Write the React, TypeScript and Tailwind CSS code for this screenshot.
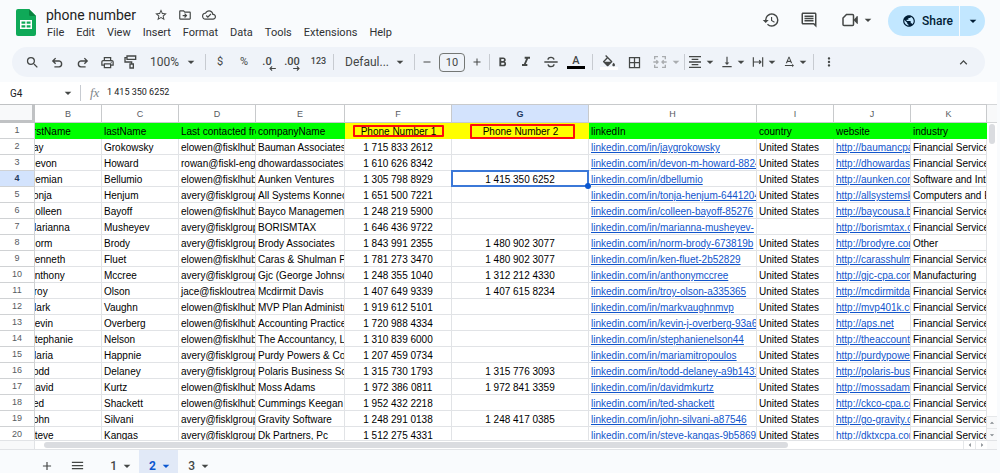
import React from 'react';
import {
  MdAdd,
  MdArrowDropDown,
  MdBorderAll,
  MdExpandLess,
  MdFormatAlignCenter,
  MdFormatBold,
  MdFormatColorFill,
  MdFormatItalic,
  MdHistory,
  MdMenu,
  MdMoreVert,
  MdOutlineCloudDone,
  MdOutlineComment,
  MdOutlineDriveFileMove,
  MdOutlinePrint,
  MdPublic,
  MdRemove,
  MdSearch,
  MdStarOutline,
  MdTextRotationNone,
  MdVerticalAlignBottom,
} from 'react-icons/md';

type Row = [string, string, string, string, string, string, string, string, string, string];

const US = 'United States';
const FIN = 'Financial Services';
const ELOWEN = 'elowen@fisklhub.com';
const AVERY = 'avery@fisklgroup.com';

const rows: Row[] = [
  ['Jay', 'Grokowsky', ELOWEN, 'Bauman Associates', '1 715 833 2612', '', 'linkedin.com/in/jaygrokowsky', US, 'http://baumancpa.com', FIN],
  ['Devon', 'Howard', 'rowan@fiskl-engage.com', 'dhowardassociates', '1 610 626 8342', '', 'linkedin.com/in/devon-m-howard-8824', US, 'http://dhowardassociates.com', FIN],
  ['Demian', 'Bellumio', ELOWEN, 'Aunken Ventures', '1 305 798 8929', '1 415 350 6252', 'linkedin.com/in/dbellumio', US, 'http://aunken.com', 'Software and Internet'],
  ['Tonja', 'Henjum', AVERY, 'All Systems Konnect', '1 651 500 7221', '', 'linkedin.com/in/tonja-henjum-6441204', US, 'http://allsystemsk.com', 'Computers and Electronics'],
  ['Colleen', 'Bayoff', ELOWEN, 'Bayco Management', '1 248 219 5900', '', 'linkedin.com/in/colleen-bayoff-85276', US, 'http://baycousa.biz', FIN],
  ['Marianna', 'Musheyev', AVERY, 'BORISMTAX', '1 646 436 9722', '', 'linkedin.com/in/marianna-musheyev-', '', 'http://borismtax.com', FIN],
  ['Norm', 'Brody', AVERY, 'Brody Associates', '1 843 991 2355', '1 480 902 3077', 'linkedin.com/in/norm-brody-673819b', US, 'http://brodyre.com', 'Other'],
  ['Kenneth', 'Fluet', ELOWEN, 'Caras & Shulman PC', '1 781 273 3470', '1 480 902 3077', 'linkedin.com/in/ken-fluet-2b52829', US, 'http://carasshulman.com', FIN],
  ['Anthony', 'Mccree', AVERY, 'Gjc (George Johnson)', '1 248 355 1040', '1 312 212 4330', 'linkedin.com/in/anthonymccree', US, 'http://gjc-cpa.com', 'Manufacturing'],
  ['Troy', 'Olson', 'jace@fiskloutreach.com', 'Mcdirmit Davis', '1 407 649 9339', '1 407 615 8234', 'linkedin.com/in/troy-olson-a335365', US, 'http://mcdirmitdavis.com', FIN],
  ['Mark', 'Vaughn', ELOWEN, 'MVP Plan Administrators', '1 919 612 5101', '', 'linkedin.com/in/markvaughnmvp', US, 'http://mvp401k.com', FIN],
  ['Kevin', 'Overberg', ELOWEN, 'Accounting Practice', '1 720 988 4334', '', 'linkedin.com/in/kevin-j-overberg-93a6b', US, 'http://aps.net', FIN],
  ['Stephanie', 'Nelson', ELOWEN, 'The Accountancy, LLP', '1 310 839 6000', '', 'linkedin.com/in/stephanienelson44', US, 'http://theaccountancy.com', FIN],
  ['Maria', 'Happnie', AVERY, 'Purdy Powers & Co', '1 207 459 0734', '', 'linkedin.com/in/mariamitropoulos', US, 'http://purdypowers.com', FIN],
  ['Todd', 'Delaney', AVERY, 'Polaris Business Solutions', '1 315 730 1793', '1 315 776 3093', 'linkedin.com/in/todd-delaney-a9b1431', US, 'http://polaris-business.com', FIN],
  ['David', 'Kurtz', ELOWEN, 'Moss Adams', '1 972 386 0811', '1 972 841 3359', 'linkedin.com/in/davidmkurtz', US, 'http://mossadams.com', FIN],
  ['Ted', 'Shackett', ELOWEN, 'Cummings Keegan', '1 952 432 2218', '', 'linkedin.com/in/ted-shackett', US, 'http://ckco-cpa.com', FIN],
  ['John', 'Silvani', AVERY, 'Gravity Software', '1 248 291 0138', '1 248 417 0385', 'linkedin.com/in/john-silvani-a87546', US, 'http://go-gravity.com', FIN],
  ['Steve', 'Kangas', AVERY, 'Dk Partners, Pc', '1 512 275 4331', '', 'linkedin.com/in/steve-kangas-9b58695', US, 'http://dktxcpa.com', FIN],
];

const headers: Row = [
  'firstName',
  'lastName',
  'Last contacted from',
  'companyName',
  'Phone Number 1',
  'Phone Number 2',
  'linkedIn',
  'country',
  'website',
  'industry',
];

const letters = ['B', 'C', 'D', 'E', 'F', 'G', 'H', 'I', 'J', 'K'];
const menus = ['File', 'Edit', 'View', 'Insert', 'Format', 'Data', 'Tools', 'Extensions', 'Help'];

const Caret = ({ className = '' }: { className?: string }) => (
  <MdArrowDropDown className={`size-4 shrink-0 ${className}`} />
);

const Divider = () => <span className="h-4 w-px shrink-0 bg-[#c7cbd1]" />;

interface ToolProps {
  label: string;
  width?: string;
  children: React.ReactNode;
}

const Tool = ({ label, width = 'w-6', children }: ToolProps) => (
  <button aria-label={label} className={`flex h-6 shrink-0 items-center justify-center ${width}`}>
    {children}
  </button>
);

const SheetsLogo = () => (
  <svg viewBox="0 0 20 27" className="h-[27px] w-5">
    <path d="M2 0h11l7 7v18a2 2 0 0 1-2 2H2a2 2 0 0 1-2-2V2a2 2 0 0 1 2-2z" fill="#0fa958" />
    <path d="M13 0l7 7h-5.5A1.5 1.5 0 0 1 13 5.500z" fill="#08843f" />
    <path d="M4 11h12v9H4z" fill="#fff" />
    <path d="M5.500 12.500h3.800v2.300H5.500zM10.700 12.500h3.800v2.300h-3.800zM5.500 16.200h3.800v2.300H5.500zM10.700 16.200h3.800v2.300h-3.800z" fill="#0fa958" />
  </svg>
);

const UndoIcon = ({ flip = false }: { flip?: boolean }) => (
  <svg viewBox="0 0 24 24" className={`size-[15px] ${flip ? '-scale-x-100' : ''}`} fill="none" stroke="currentColor" strokeWidth="2.200">
    <path d="M9 4L4.500 8.500 9 13M5 8.500h9.500a4.800 4.800 0 0 1 0 9.500H7" transform="translate(0 1)" />
  </svg>
);

const RollerIcon = () => (
  <svg viewBox="0 0 24 24" className="size-4" fill="none" stroke="currentColor" strokeWidth="2">
    <path d="M6 3h13v5H6zM6 5.500H3V12h10v3M10.500 15h5v6h-5z" />
  </svg>
);

const StrikeIcon = () => (
  <svg viewBox="0 0 24 24" className="size-4" fill="none" stroke="currentColor" strokeWidth="2">
    <path d="M2 12h20M16.500 8.500C16 6 14.500 5 12 5S7.500 6.500 7.500 8.800M7.500 15.500C8 18 9.500 19 12 19s4.500-1.200 4.500-3.500" />
  </svg>
);

const MergeIcon = () => (
  <svg viewBox="0 0 24 24" className="size-4" fill="none" stroke="currentColor" strokeWidth="2">
    <path d="M9 4H4v4M15 4h5v4M9 20H4v-4M15 20h5v-4M2 12h7M22 12h-7M6.500 9.500L9 12l-2.500 2.500M17.500 9.500L15 12l2.500 2.500" />
  </svg>
);

const WrapIcon = () => (
  <svg viewBox="0 0 24 24" className="size-4" fill="none" stroke="currentColor" strokeWidth="2">
    <path d="M4 4v16M20 4v16M4 12h13M14 9l3 3-3 3" />
  </svg>
);

const MeetIcon = () => (
  <svg viewBox="0 0 16 14" className="h-3.5 w-4" fill="none">
    <path d="M4.500 1.500h6a1 1 0 0 1 1 1v9a1 1 0 0 1-1 1h-8.500a1 1 0 0 1-1-1V5z" stroke="currentColor" strokeWidth="1.500" />
    <path d="M11.500 7L15 3.200a.5.5 0 0 1 .8.300v7a.5.5 0 0 1-.8.300z" fill="currentColor" />
  </svg>
);

const DecimalIcon = ({ more = false }: { more?: boolean }) => (
  <span className="relative text-[11px] font-medium leading-4">
    {more ? '.00' : '.0'}
    <svg
      viewBox="0 0 8 6"
      className={`absolute top-3 h-[5px] w-[7px] ${more ? 'right-0 -scale-x-100' : '-right-1'}`}
      fill="none"
      stroke="currentColor"
      strokeWidth="1.300"
    >
      <path d="M8 3H1M3.500 .5L1 3l2.500 2.500" />
    </svg>
  </span>
);

const TitleBar = () => (
  <header className="flex h-[47px] shrink-0 items-start pl-4 pr-[15px]">
    <div className="pt-[9px]">
      <SheetsLogo />
    </div>
    <div className="flex-1 pl-2.5 pt-1.5">
      <div className="flex h-[18px] items-center text-[#444746]">
        <input
          aria-label="Document name"
          defaultValue="phone number"
          className="w-[107px] bg-transparent text-[14px] leading-[18px] text-[#1f1f1f] outline-none"
        />
        <div className="flex items-center gap-2">
          <button aria-label="Star" className="flex size-4 items-center justify-center">
            <MdStarOutline className="size-3.5" />
          </button>
          <button aria-label="Move" className="flex size-4 items-center justify-center">
            <MdOutlineDriveFileMove className="size-3.5" />
          </button>
          <button aria-label="Saved to Drive" className="flex size-4 items-center justify-center">
            <MdOutlineCloudDone className="size-3.5" />
          </button>
        </div>
      </div>
      <nav className="flex gap-3 pl-px pt-px text-[11px] leading-4 text-[#303134]">
        {menus.map((menu) => (
          <button key={menu}>{menu}</button>
        ))}
      </nav>
    </div>
    <div className="flex h-10 items-center text-[#444746]">
      <button aria-label="Version history" className="mr-5">
        <MdHistory className="size-[18px]" />
      </button>
      <button aria-label="Comments" className="mr-6">
        <MdOutlineComment className="size-[18px]" />
      </button>
      <button aria-label="Join a call" className="mr-3 flex items-center">
        <MeetIcon />
        <Caret className="ml-0.5" />
      </button>
      <div className="mt-px flex h-[30px] overflow-hidden rounded-full text-[#001d35]">
        <button className="flex items-center gap-1.5 bg-[#c2e7ff] pl-3.5 pr-1.5 text-[12px] font-medium">
          <MdPublic className="size-3.5" />
          Share
        </button>
        <button aria-label="Share options" className="ml-px flex w-[25px] items-center justify-center bg-[#c2e7ff]">
          <Caret />
        </button>
      </div>
    </div>
  </header>
);

const Toolbar = () => (
  <div
    role="toolbar"
    className="ml-3 mr-[15px] flex h-[30px] shrink-0 items-center rounded-full bg-[#eff3f9] pl-2 pr-2.5 text-[11px] text-[#444746]"
  >
    <Tool label="Search menus" width="w-[25px]"><MdSearch className="size-[15px]" /></Tool>
    <Tool label="Undo" width="w-[25px]"><UndoIcon /></Tool>
    <Tool label="Redo" width="w-[25px]"><UndoIcon flip /></Tool>
    <Tool label="Print"><MdOutlinePrint className="size-[15px]" /></Tool>
    <Tool label="Paint format"><RollerIcon /></Tool>
    <button className="flex w-[62px] items-center justify-between pl-[7px] pr-1.5 text-[12px]">
      100%
      <Caret />
    </button>
    <Divider />
    <Tool label="Currency" width="w-7">$</Tool>
    <Tool label="Percent" width="w-5">%</Tool>
    <Tool label="Decrease decimals" width="w-[26px]"><DecimalIcon /></Tool>
    <Tool label="Increase decimals"><DecimalIcon more /></Tool>
    <Tool label="More formats" width="w-[29px]"><span className="text-[9px] font-medium">123</span></Tool>
    <Divider />
    <button className="flex w-20 items-center justify-between pl-[11px] pr-1.5 text-[12px]">
      Defaul...
      <Caret />
    </button>
    <Divider />
    <Tool label="Decrease font size"><MdRemove className="size-3" /></Tool>
    <input
      aria-label="Font size"
      defaultValue="10"
      className="h-[19px] w-[26px] shrink-0 rounded border border-[#747775] bg-transparent text-center text-[11px] outline-none"
    />
    <Tool label="Increase font size"><MdAdd className="size-3" /></Tool>
    <Divider />
    <Tool label="Bold" width="w-6"><MdFormatBold className="size-[15px]" /></Tool>
    <Tool label="Italic"><MdFormatItalic className="size-4" /></Tool>
    <Tool label="Strikethrough" width="w-[26px]"><StrikeIcon /></Tool>
    <Tool label="Text color">
      <span className="flex flex-col items-center text-[11px] font-medium leading-[11px]">
        A
        <span className="h-[3px] w-[18px] bg-black" />
      </span>
    </Tool>
    <span className="w-1" />
    <Divider />
    <Tool label="Fill color" width="w-[31px]">
      <span className="flex flex-col items-center">
        <MdFormatColorFill viewBox="0 0 24 18" className="h-3 w-4" />
        <span className="h-[3px] w-[18px] bg-white" />
      </span>
    </Tool>
    <Tool label="Borders" width="w-5"><MdBorderAll className="size-[15px]" /></Tool>
    <button aria-label="Merge cells" className="flex w-10 items-center justify-end text-[#a9acaf]">
      <MergeIcon />
      <Caret />
    </button>
    <Divider />
    <button aria-label="Horizontal align" className="flex w-[35px] items-center justify-end pr-0.5">
      <MdFormatAlignCenter className="size-4" />
      <Caret className="-ml-px" />
    </button>
    <button aria-label="Vertical align" className="flex w-[31px] items-center justify-end pr-0.5">
      <MdVerticalAlignBottom className="size-4" />
      <Caret className="-ml-px" />
    </button>
    <button aria-label="Text wrapping" className="flex w-[31px] items-center justify-end pr-0.5">
      <WrapIcon />
      <Caret className="-ml-px" />
    </button>
    <button aria-label="Text rotation" className="flex w-[31px] items-center justify-end pr-0.5">
      <MdTextRotationNone className="size-4" />
      <Caret className="-ml-px" />
    </button>
    <Divider />
    <Tool label="More" width="w-[29px]"><MdMoreVert className="size-3.5" /></Tool>
    <span className="flex-1" />
    <Tool label="Hide menus"><MdExpandLess className="size-[15px]" /></Tool>
  </div>
);

const FormulaBar = () => (
  <div className="mt-[5px] flex h-[22px] shrink-0 items-center bg-white pl-2.5 text-[10px] text-[#202124]">
    <input aria-label="Name box" defaultValue="G4" className="w-[50px] bg-transparent outline-none" />
    <Caret className="text-[#444746]" />
    <span className="ml-1" />
    <Divider />
    <span className="w-[26px] pl-[9px] font-['Liberation_Serif',serif] text-[13px] italic text-[#80868b]">fx</span>
    <input
      aria-label="Formula"
      defaultValue="1 415 350 6252"
      className="min-w-0 flex-1 bg-transparent text-[9px] outline-none"
    />
  </div>
);

const RedFrame = ({ className }: { className: string }) => (
  <span className={`pointer-events-none absolute z-10 rounded-[1px] border-2 border-[#ff0c0c] ${className}`} />
);

const Cell = ({ value, col, selected }: { value: string; col: number; selected: boolean }) => {
  const centered = col === 4 || col === 5;
  const link = col === 6 || col === 8;
  return (
    <td className="relative h-4 border-b border-r border-[#e1e3e6] p-0">
      <div
        className={`h-[15px] overflow-hidden whitespace-nowrap leading-[17px] ${
          centered ? 'text-center' : col === 0 ? '-indent-[7px]' : 'pl-0.5'
        }`}
      >
        {link ? (
          <a href="#" className="text-[#1155cc] underline">{value}</a>
        ) : (
          value
        )}
      </div>
      {selected && (
        <div className="absolute -bottom-px -left-px -right-px -top-px z-10 border-2 border-[#3b78d8]">
          <span className="absolute -bottom-1 -right-1 size-1.5 rounded-full bg-[#0b57d0]" />
        </div>
      )}
    </td>
  );
};

const Grid = () => (
  <div className="min-h-0 flex-1 overflow-hidden bg-white">
    <table className="w-full table-fixed border-separate border-spacing-0 font-['Liberation_Sans',Arial,sans-serif] text-[10px] text-black">
      <colgroup>
        <col className="w-[35px]" />
        <col className="w-[67px]" />
        <col className="w-[77px]" />
        <col className="w-[77px]" />
        <col className="w-[89px]" />
        <col className="w-[107px]" />
        <col className="w-[137px]" />
        <col className="w-[168px]" />
        <col className="w-[77px]" />
        <col className="w-[77px]" />
        <col />
      </colgroup>
      <thead>
        <tr>
          <th className="h-[19px] border-b-[3px] border-r-[3px] border-t border-[#c0c2c4] bg-[#f8f9fa] p-0" />
          {letters.map((letter) => (
            <th
              key={letter}
              className={`h-[19px] border-b border-r border-t border-[#c8cacc] p-0 text-[9px] leading-4 ${
                letter === 'G' ? 'bg-[#d3e3fd] font-bold text-[#1f3a5f]' : 'font-normal text-[#575b5f]'
              }`}
            >
              {letter}
            </th>
          ))}
        </tr>
      </thead>
      <tbody>
        <tr>
          <th className="h-4 border-b border-r border-[#d0d2d4] p-0 text-[9px] font-normal leading-[15px] text-[#575b5f]">1</th>
          {headers.map((header, i) => {
            const phone = i === 4 || i === 5;
            return (
              <td
                key={header}
                className={`relative h-4 p-0 ${phone ? 'bg-[#ffff00]' : 'bg-[#00ff00]'}`}
              >
                <div
                  className={`h-4 overflow-hidden whitespace-nowrap leading-[18px] ${
                    phone ? 'text-center' : i === 0 ? '-indent-[7px]' : 'pl-0.5'
                  }`}
                >
                  {header}
                </div>
                {i === 4 && <RedFrame className="inset-x-[8px] bottom-0.5 top-0.5" />}
                {i === 5 && <RedFrame className="bottom-0 left-[18px] right-[14px] top-px" />}
              </td>
            );
          })}
        </tr>
        {rows.map((row, r) => (
          <tr key={r}>
            <th
              className={`h-4 border-b border-r border-[#d0d2d4] p-0 text-[9px] leading-[15px] ${
                r === 2 ? 'bg-[#d3e3fd] font-bold text-[#1f3a5f]' : 'font-normal text-[#575b5f]'
              }`}
            >
              {r + 2}
            </th>
            {row.map((value, c) => (
              <Cell key={c} value={value} col={c} selected={r === 2 && c === 5} />
            ))}
          </tr>
        ))}
      </tbody>
    </table>
  </div>
);

const VerticalScroll = () => (
  <div className="flex w-2.5 shrink-0 flex-col bg-white">
    <div className="h-[19px] border-b border-t border-[#d5d7d9] bg-[#f8f9fa]" />
    <div className="mx-auto mt-px h-5 w-1.5 rounded-full bg-[#dadce0]" />
    <div className="flex-1" />
    {['Up', 'Down'].map((dir) => (
      <button
        key={dir}
        aria-label={`Scroll ${dir.toLowerCase()}`}
        className="flex h-3 items-center justify-center border-t border-[#e6e8ea] bg-[#f8f9fa] text-[#80868b]"
      >
        <MdArrowDropDown className={`size-2.5 ${dir === 'Up' ? 'rotate-180' : ''}`} />
      </button>
    ))}
  </div>
);

const HorizontalScroll = () => (
  <div className="flex h-2.5 shrink-0 items-center border-b border-t border-[#e1e3e6] bg-white">
    <div className="h-full w-[35px] border-r border-[#e1e3e6] bg-[#f8f9fa]" />
    <div className="flex h-full flex-1 items-center pl-[9px]">
      <div className="h-1.5 w-[81%] rounded-full bg-[#dadce0]" />
    </div>
    <button aria-label="Scroll left" className="flex h-full w-3 items-center justify-center border-l border-[#e6e8ea] text-[#80868b]">
      <MdArrowDropDown className="size-2.5 rotate-90" />
    </button>
    <button aria-label="Scroll right" className="flex h-full w-3 items-center justify-center border-l border-[#e6e8ea] text-[#80868b]">
      <MdArrowDropDown className="size-2.5 -rotate-90" />
    </button>
    <div className="h-full w-2.5 bg-[#f8f9fa]" />
  </div>
);

const SheetTabs = () => (
  <footer className="flex h-[23px] shrink-0 items-stretch pl-9 text-[12px] font-medium text-[#444746]">
    <button aria-label="Add sheet" className="flex w-[22px] items-center justify-center pt-2">
      <MdAdd className="size-3.5" />
    </button>
    <button aria-label="All sheets" className="ml-2 flex w-[22px] items-center justify-center pt-2">
      <MdMenu className="size-[15px]" />
    </button>
    <div className="ml-3 flex">
      {['1', '2', '3'].map((tab) => (
        <button
          key={tab}
          className={`flex w-[39px] items-center justify-end gap-0.5 pr-1 pt-2 ${
            tab === '2' ? 'bg-[#e1e9f7] font-bold text-[#0b57d0]' : ''
          }`}
        >
          {tab}
          <Caret />
        </button>
      ))}
    </div>
  </footer>
);

export default function App() {
  return (
    <div className="flex h-screen flex-col overflow-hidden bg-[#f9fbfd] font-[Roboto,Arial,sans-serif]">
      <TitleBar />
      <Toolbar />
      <div className="mr-[3px] flex min-h-0 flex-1 flex-col">
        <FormulaBar />
        <div className="flex min-h-0 flex-1">
          <Grid />
          <VerticalScroll />
        </div>
        <HorizontalScroll />
      </div>
      <SheetTabs />
    </div>
  );
}
